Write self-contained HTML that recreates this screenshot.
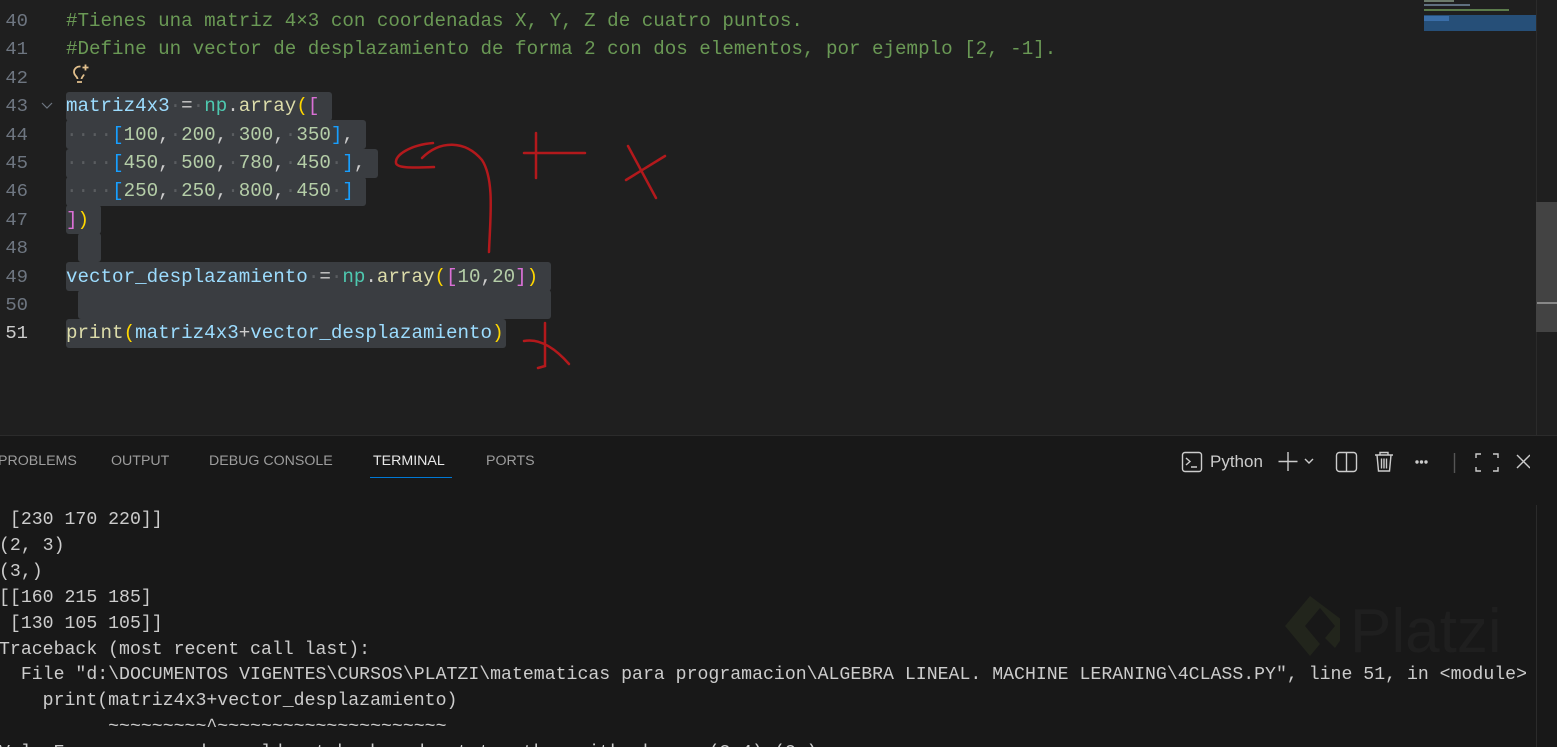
<!DOCTYPE html>
<html><head><meta charset="utf-8"><style>
html,body{margin:0;padding:0;background:#1f1f1f;width:1557px;height:747px;overflow:hidden;position:relative}
.mono{font-family:"Liberation Mono","DejaVu Sans Mono",monospace}
#ed{position:absolute;left:0;top:0;width:1557px;height:435px;background:#1f1f1f}
.ln{position:absolute;left:0;width:28px;text-align:right;color:#6e7681;font-size:18.9px;line-height:28.4px}
.code{position:absolute;left:66px;font-size:19.2px;line-height:28.4px;white-space:pre;color:#cccccc}
.sel{position:absolute;background:#3a3d41;border-radius:3px}
.c{color:#6a9955}.v{color:#9cdcfe}.t{color:#4ec9b0}.f{color:#dcdcaa}.y{color:#ffd700}.p{color:#da70d6}.b{color:#179fff}.n{color:#b5cea8}.d{color:#5a5d60}
#panel{position:absolute;left:0;top:435px;width:1557px;height:312px;background:#181818;border-top:1px solid #2b2b2b}
.tab{position:absolute;top:17px;font-family:"Liberation Sans",sans-serif;font-size:14.2px;color:#9d9d9d}
.term{position:absolute;left:-1px;top:72px;font-size:18.2px;line-height:25.9px;color:#cccccc;white-space:pre}
</style></head><body>
<div id="ed">
  <div class="sel" style="left:66px;top:92px;width:266px;height:29px"></div>
  <div class="sel" style="left:66px;top:120px;width:300px;height:29px"></div>
  <div class="sel" style="left:66px;top:149px;width:312px;height:29px"></div>
  <div class="sel" style="left:66px;top:177px;width:300px;height:29px"></div>
  <div class="sel" style="left:66px;top:205px;width:35px;height:29px"></div>
  <div class="sel" style="left:78px;top:233px;width:23px;height:29px"></div>
  <div class="sel" style="left:66px;top:262px;width:485px;height:29px"></div>
  <div class="sel" style="left:78px;top:290px;width:473px;height:29px"></div>
  <div class="sel" style="left:66px;top:319px;width:440px;height:29px"></div>

  <div class="ln mono" style="top:7px">40<br>41<br>42<br>43<br>44<br>45<br>46<br>47<br>48<br>49<br>50<br><span style="color:#cccccc">51</span></div>
  <svg style="position:absolute;left:40px;top:100px" width="14" height="10" fill="none" stroke="#6e7681" stroke-width="1.2"><path d="M2 3l5 5 5-5"/></svg>
  <div class="code mono" style="top:7px"><span class="c">#Tienes una matriz 4×3 con coordenadas X, Y, Z de cuatro puntos.</span>
<span class="c">#Define un vector de desplazamiento de forma 2 con dos elementos, por ejemplo [2, -1].</span>

<span class="v">matriz4x3</span><span class="d">·</span>=<span class="d">·</span><span class="t">np</span>.<span class="f">array</span><span class="y">(</span><span class="p">[</span>
<span class="d">····</span><span class="b">[</span><span class="n">100</span>,<span class="d">·</span><span class="n">200</span>,<span class="d">·</span><span class="n">300</span>,<span class="d">·</span><span class="n">350</span><span class="b">]</span>,
<span class="d">····</span><span class="b">[</span><span class="n">450</span>,<span class="d">·</span><span class="n">500</span>,<span class="d">·</span><span class="n">780</span>,<span class="d">·</span><span class="n">450</span><span class="d">·</span><span class="b">]</span>,
<span class="d">····</span><span class="b">[</span><span class="n">250</span>,<span class="d">·</span><span class="n">250</span>,<span class="d">·</span><span class="n">800</span>,<span class="d">·</span><span class="n">450</span><span class="d">·</span><span class="b">]</span>
<span class="p">]</span><span class="y">)</span>

<span class="v">vector_desplazamiento</span><span class="d">·</span>=<span class="d">·</span><span class="t">np</span>.<span class="f">array</span><span class="y">(</span><span class="p">[</span><span class="n">10</span>,<span class="n">20</span><span class="p">]</span><span class="y">)</span>

<span class="f">print</span><span class="y">(</span><span class="v">matriz4x3</span>+<span class="v">vector_desplazamiento</span><span class="y">)</span></div>
  <svg style="position:absolute;left:68px;top:62px" width="24" height="24" viewBox="0 0 24 24" fill="none" stroke="#e2c08d" stroke-width="1.8"><path d="M9 20h5M9.5 17c0-2.5-3.5-3.5-3.5-7a5.5 5.5 0 0 1 6.5-5.4M13.5 17c0-1.5 1.5-2.5 2.5-4.5"/><path d="M17.5 2.5v6M14.5 5.5h6"/></svg>
  <div style="position:absolute;left:1424px;top:0;width:30px;height:2px;background:#6b7a6b"></div>
  <div style="position:absolute;left:1424px;top:4px;width:46px;height:2px;background:#5f6f7f"></div>
  <div style="position:absolute;left:1424px;top:9px;width:85px;height:2px;background:#5b7b4b"></div>
  <div style="position:absolute;left:1424px;top:15px;width:112px;height:16px;background:#264f78"></div>
  <div style="position:absolute;left:1424px;top:16px;width:25px;height:5px;background:#3a6ea8"></div>
  <div style="position:absolute;left:1536px;top:0;width:1px;height:435px;background:#2b2b2b"></div>
  <div style="position:absolute;left:1536px;top:202px;width:21px;height:130px;background:#434343"></div>
  <div style="position:absolute;left:1537px;top:302px;width:20px;height:2px;background:#888"></div>
  <svg style="position:absolute;left:0;top:0" width="1557" height="435" fill="none" stroke="#b3191c" stroke-width="2.5" stroke-linecap="round">
    <path d="M433 143C410 145 395 155 396 163C397 168 410 168 434 167"/>
    <path d="M422 158C440 140 465 140 482 160C495 180 490 220 489 252"/>
    <path d="M536 133V178M524 153H585"/>
    <path d="M628 146L656 198M626 180L665 156"/>
    <path d="M545 323V366L538 368M524 341C540 338 555 348 569 364"/>
  </svg>
</div>
<div id="panel">
  <div class="tab" style="left:-2px">PROBLEMS</div>
  <div class="tab" style="left:111px">OUTPUT</div>
  <div class="tab" style="left:209px">DEBUG CONSOLE</div>
  <div class="tab" style="left:373px;color:#e7e7e7">TERMINAL</div>
  <div style="position:absolute;left:370px;top:41px;width:82px;height:1px;background:#0078d4"></div>
  <div class="tab" style="left:486px">PORTS</div>
  <svg style="position:absolute;left:1180px;top:14px" width="350" height="24" fill="none" stroke="#cccccc" stroke-width="1.4">
    <rect x="2.5" y="2.5" width="19" height="19" rx="2.5"/><path d="M6 8l4 3.5-4 3.5M11 17h6"/>
    <path d="M108 2v19M98.5 11.5h19M125 9l4 4 4-4"/>
    <rect x="156.5" y="2.5" width="20" height="19" rx="3"/><path d="M166.5 2.5v19"/>
    <path d="M195 5h18M200 5V2.5h8V5M197 5l1.5 16h11L211 5M201.5 8.5v10M204 8.5v10M206.5 8.5v10"/>
    <circle cx="237" cy="12" r="1" fill="#ccc"/><circle cx="241.5" cy="12" r="1" fill="#ccc"/><circle cx="246" cy="12" r="1" fill="#ccc"/>
    <path d="M274.5 3v20" stroke="#555"/>
    <path d="M296 8V4h5M313 4h5v4M318 17v4h-5M301 21h-5v-4"/>
    <path d="M337 5l13 13M350 5l-13 13"/>
  </svg>
  <div style="position:absolute;left:1210px;top:16px;font-family:'Liberation Sans',sans-serif;font-size:17px;color:#cccccc">Python</div>
  <div style="position:absolute;left:1536px;top:69px;width:1px;height:250px;background:#2b2b2b"></div>
  <svg style="position:absolute;left:1280px;top:155px" width="60" height="90" viewBox="0 0 60 90"><path d="M30 5L5 35l25 30 10-12-15-18 15-18 15 18-10 12 10 10 15-22z" fill="#22251c"/></svg>
  <div style="position:absolute;left:1350px;top:160px;font-family:'Liberation Sans',sans-serif;font-size:62px;color:#1f1f1f">Platzi</div>
  <div class="term mono"> [230 170 220]]
(2, 3)
(3,)
[[160 215 185]
 [130 105 105]]
Traceback (most recent call last):
  File "d:\DOCUMENTOS VIGENTES\CURSOS\PLATZI\matematicas para programacion\ALGEBRA LINEAL. MACHINE LERANING\4CLASS.PY", line 51, in &lt;module&gt;
    print(matriz4x3+vector_desplazamiento)
          ~~~~~~~~~^~~~~~~~~~~~~~~~~~~~~~
ValueError: operands could not be broadcast together with shapes (3,4) (2,)</div>
</div>
</body></html>
